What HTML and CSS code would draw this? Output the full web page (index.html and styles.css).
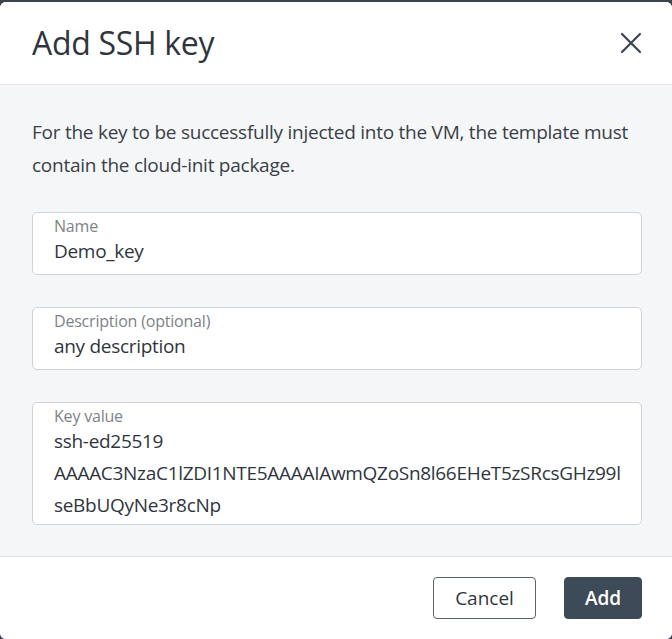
FILE: index.html
```html
<!DOCTYPE html>
<html lang="en">
<head>
<meta charset="utf-8">
<title>Add SSH key</title>
<link rel="stylesheet" href="styles.css">
</head>
<body>
<div class="modal">
  <header class="modal-header">
    <h1 class="modal-title">Add SSH key</h1>
    <button class="close" aria-label="Close">
      <svg width="22" height="22" viewBox="0 0 22 22"><path d="M2 2 L20 20 M20 2 L2 20" stroke="#3b4450" stroke-width="2.2" fill="none" stroke-linecap="round"/></svg>
    </button>
  </header>
  <section class="modal-body">
    <p class="intro">For the key to be successfully injected into the VM, the template must contain the cloud-init package.</p>
    <div class="field">
      <span class="label">Name</span>
      <span class="value">Demo_key</span>
    </div>
    <div class="field">
      <span class="label">Description (optional)</span>
      <span class="value">any description</span>
    </div>
    <div class="field field-multi">
      <span class="label">Key value</span>
      <span class="value">ssh-ed25519<br>AAAAC3NzaC1lZDI1NTE5AAAAIAwmQZoSn8l66EHeT5zSRcsGHz99l<br>seBbUQyNe3r8cNp</span>
    </div>
  </section>
  <footer class="modal-footer">
    <button class="btn btn-secondary">Cancel</button>
    <button class="btn btn-primary">Add</button>
  </footer>
</div>
</body>
</html>
```

FILE: styles.css
```css
html, body {
  margin: 0;
  padding: 0;
  background: #3a4450;
  height: 100%;
}
body {
  font-family: "Open Sans", "Noto Sans", sans-serif;
  color: #2f353d;
  padding-top: 2px;
  box-sizing: border-box;
  overflow: hidden;
}
.modal {
  width: 672px;
  height: 637px;
  background: #f5f6f8;
  border-radius: 6px;
  overflow: hidden;
  display: flex;
  flex-direction: column;
}
.modal-header {
  background: #fff;
  height: 83px;
  flex: none;
  box-sizing: border-box;
  border-bottom: 1px solid #e1e3e6;
  display: flex;
  align-items: center;
  justify-content: space-between;
  padding: 0 30px 0 32px;
}
.modal-title {
  margin: 0;
  font-size: 32px;
  line-height: 40px;
  font-weight: 400;
  color: #2f353d;
  letter-spacing: -0.3px;
}
.close {
  background: none;
  border: 0;
  padding: 0;
  width: 22px;
  height: 22px;
  display: flex;
  cursor: pointer;
}
.modal-body {
  flex: 1;
  padding: 31px 30px 0 32px;
  display: flex;
  flex-direction: column;
  gap: 32px;
}
.intro {
  margin: 0 0 -2px;
  font-size: 19px;
  line-height: 33px;
  color: #3a3f46;
  letter-spacing: -0.25px;
}
.field {
  background: #fff;
  border: 1px solid #cfd2d6;
  border-radius: 5px;
  padding: 4px 20px 7px 21px;
  display: flex;
  flex-direction: column;
}
.field-multi {
  padding-bottom: 3px;
}
.label {
  font-size: 16px;
  line-height: 18px;
  color: #7d8288;
  letter-spacing: -0.2px;
}
.value {
  font-size: 19px;
  line-height: 32px;
  color: #2f353d;
  letter-spacing: -0.3px;
}
.modal-footer {
  background: #fff;
  height: 83px;
  flex: none;
  box-sizing: border-box;
  border-top: 1px solid #e1e3e6;
  display: flex;
  align-items: center;
  justify-content: flex-end;
  gap: 28px;
  padding: 0 30px 0 0;
}
.btn {
  font-family: inherit;
  height: 42px;
  border-radius: 4px;
  font-size: 19px;
  padding: 0;
  cursor: pointer;
}
.btn-secondary {
  width: 103px;
  background: #fff;
  border: 1px solid #5b636c;
  color: #2f353d;
}
.btn-primary {
  width: 78px;
  background: #3d4a57;
  border: 1px solid #3d4a57;
  color: #fff;
  font-weight: 600;
}
```
